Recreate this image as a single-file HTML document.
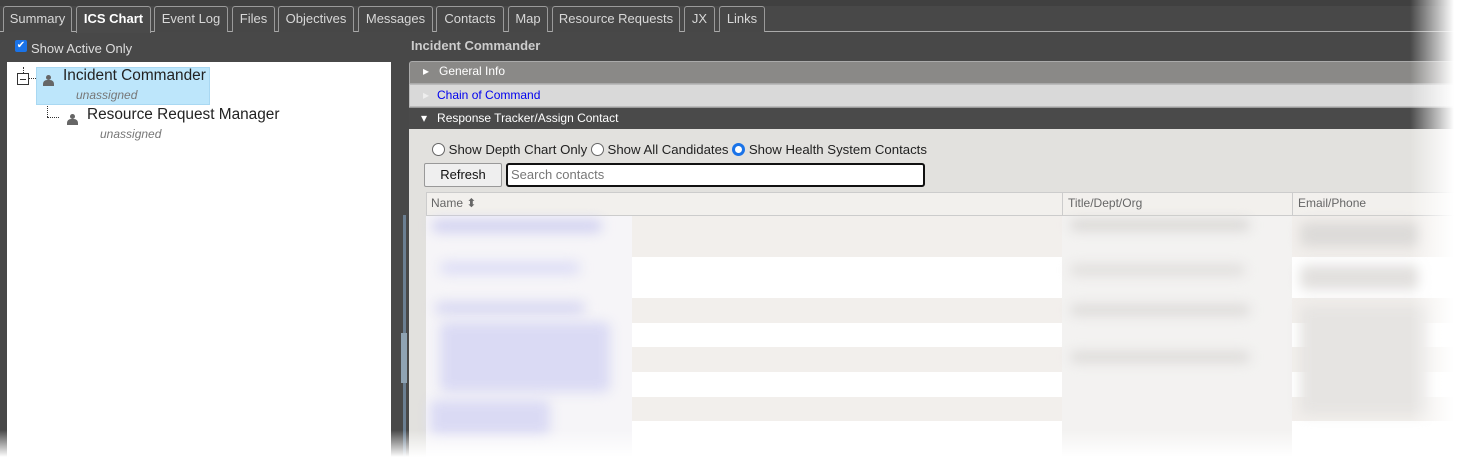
<!DOCTYPE html>
<html><head><meta charset="utf-8"><style>
*{box-sizing:border-box;margin:0;padding:0}
body{width:1465px;height:457px;overflow:hidden;background:#484848;font-family:"Liberation Sans",Arial,sans-serif;position:relative}
.a{position:absolute}
.tab{position:absolute;top:6px;height:26px;border:1px solid #9a9a9a;border-bottom:none;border-radius:3px 3px 0 0;color:#d8d8d8;font-size:13px;text-align:center;line-height:24px;background:#474747}
.tab.act{background:#4a4a4a;color:#fff;font-weight:bold;height:27px}
.ic{display:inline-block;width:10px;height:11px;position:relative;vertical-align:middle}
.ic:before{content:"";position:absolute;left:3px;top:0;width:5px;height:5px;border-radius:50%;background:#666}
.ic:after{content:"";position:absolute;left:0;top:5px;width:11px;height:6px;border-radius:4px 4px 0 0;background:#666}
.row{position:absolute;left:426px;width:1040px}
.blur{position:absolute;filter:blur(6px);border-radius:6px}
</style></head><body>
<div class="a" style="left:0;top:0;width:1465px;height:6px;background:#404040"></div>
<div class="a" style="left:0;top:31px;width:1465px;height:1px;background:#aaa"></div>
<div class="tab" style="left:3px;width:69px">Summary</div>
<div class="tab act" style="left:76px;width:75px">ICS Chart</div>
<div class="tab" style="left:154px;width:74px">Event Log</div>
<div class="tab" style="left:232px;width:43px">Files</div>
<div class="tab" style="left:278px;width:76px">Objectives</div>
<div class="tab" style="left:358px;width:75px">Messages</div>
<div class="tab" style="left:436px;width:68px">Contacts</div>
<div class="tab" style="left:508px;width:40px">Map</div>
<div class="tab" style="left:552px;width:128px">Resource Requests</div>
<div class="tab" style="left:684px;width:31px">JX</div>
<div class="tab" style="left:719px;width:46px">Links</div>

<div class="a" style="left:15px;top:40px;width:12px;height:12px;background:#1a73e8;border-radius:2px;color:#fff;font-size:10px;line-height:12px;text-align:center">✔</div>
<div class="a" style="left:31px;top:41px;color:#ddd;font-size:13px">Show Active Only</div>

<div class="a" style="left:7px;top:62px;width:384px;height:395px;background:#fff"></div>
<div class="a" style="left:23px;top:67px;height:6px;border-left:1px dotted #333"></div>
<div class="a" style="left:17px;top:73px;width:12px;height:12px;border:1px solid #333;background:#fff"></div>
<div class="a" style="left:20px;top:79px;width:6px;height:1px;background:#333"></div>
<div class="a" style="left:29px;top:78px;width:7px;border-top:1px dotted #333"></div>
<div class="a" style="left:36px;top:67px;width:174px;height:38px;background:#bde6fb;border:1px solid #a9d8f2"></div>
<div class="a" style="left:43px;top:72px"><span class="ic"></span></div>
<div class="a" style="left:63px;top:67px;font-size:15.4px;color:#222">Incident Commander</div>
<div class="a" style="left:76px;top:88px;font-size:12px;color:#777;font-style:italic">unassigned</div>
<div class="a" style="left:47px;top:106px;height:11px;border-left:1px dotted #333"></div>
<div class="a" style="left:47px;top:117px;width:12px;border-top:1px dotted #333"></div>
<div class="a" style="left:67px;top:111px"><span class="ic"></span></div>
<div class="a" style="left:87px;top:106px;font-size:15.4px;color:#222">Resource Request Manager</div>
<div class="a" style="left:100px;top:127px;font-size:12px;color:#777;font-style:italic">unassigned</div>

<div class="a" style="left:403px;top:215px;width:3px;height:242px;background:#6b7f92"></div>
<div class="a" style="left:401px;top:333px;width:6px;height:50px;background:#8fa3b3"></div>

<div class="a" style="left:411px;top:38px;color:#ccc;font-size:13px;font-weight:bold">Incident Commander</div>
<div class="a" style="left:409px;top:61px;width:1056px;height:23px;background:#8a8987;border:1px solid #aaa;border-radius:3px 0 0 0"></div>
<div class="a" style="left:423px;top:64px;color:#fff;font-size:12px">▸&nbsp;&nbsp;&nbsp;General Info</div>
<div class="a" style="left:409px;top:84px;width:1056px;height:23px;background:#d9d9d9;border:1px solid #bbb"></div>
<div class="a" style="left:423px;top:88px;color:#eee;font-size:12px">▸</div>
<div class="a" style="left:437px;top:88px;color:#0000ee;font-size:12px">Chain of Command</div>
<div class="a" style="left:409px;top:107px;width:1056px;height:22px;background:#4a4a4a;border-top:1px solid #999"></div>
<div class="a" style="left:421px;top:111px;color:#fff;font-size:12px">▾&nbsp;&nbsp;&nbsp;Response Tracker/Assign Contact</div>

<div class="a" style="left:409px;top:129px;width:1056px;height:328px;background:#e2e1de"></div>
<div class="a" style="left:432px;top:142px;font-size:13.2px;color:#222;white-space:nowrap">
<span style="display:inline-block;width:13px;height:13px;border:1px solid #666;border-radius:50%;background:#fff;vertical-align:-2px"></span> Show Depth Chart Only
<span style="display:inline-block;width:13px;height:13px;border:1px solid #666;border-radius:50%;background:#fff;vertical-align:-2px"></span> Show All Candidates
<span style="display:inline-block;width:13px;height:13px;border:3px solid #1a73e8;border-radius:50%;background:#fff;vertical-align:-2px"></span> Show Health System Contacts</div>
<div class="a" style="left:424px;top:163px;width:78px;height:24px;background:#efefef;border:1px solid #999;border-radius:2px;font-size:13px;text-align:center;line-height:22px;color:#111">Refresh</div>
<div class="a" style="left:506px;top:163px;width:419px;height:24px;background:#fff;border:2px solid #111;border-radius:3px;font-size:13px;color:#777;padding-left:3px;line-height:20px">Search contacts</div>

<div class="row" style="top:192px;height:24px;background:#f2f0ed;border:1px solid #ccc"></div>
<div class="a" style="left:1062px;top:192px;width:1px;height:24px;background:#ccc"></div>
<div class="a" style="left:1292px;top:192px;width:1px;height:24px;background:#ccc"></div>
<div class="a" style="left:431px;top:196px;font-size:12px;color:#666">Name ⬍</div>
<div class="a" style="left:1068px;top:196px;font-size:12px;color:#666">Title/Dept/Org</div>
<div class="a" style="left:1298px;top:196px;font-size:12px;color:#666">Email/Phone</div>

<div class="row" style="top:216px;height:41px;background:#f2efec"></div>
<div class="row" style="top:257px;height:41px;background:#fff"></div>
<div class="row" style="top:298px;height:25px;background:#f2efec"></div>
<div class="row" style="top:323px;height:24px;background:#fff"></div>
<div class="row" style="top:347px;height:25px;background:#f2efec"></div>
<div class="row" style="top:372px;height:25px;background:#fff"></div>
<div class="row" style="top:397px;height:24px;background:#f2efec"></div>
<div class="row" style="top:421px;height:36px;background:#fff"></div>
<div class="a" style="left:426px;top:216px;width:206px;height:241px;background:#f6f5f8"></div>
<div class="a" style="left:1062px;top:216px;width:230px;height:241px;background:#f3f2f1"></div>
<div class="blur" style="left:432px;top:220px;width:170px;height:12px;background:#cfcff0"></div>
<div class="blur" style="left:440px;top:262px;width:140px;height:12px;background:#dcdcf6"></div>
<div class="blur" style="left:435px;top:302px;width:150px;height:12px;background:#d6d6f2"></div>
<div class="blur" style="left:440px;top:322px;width:170px;height:70px;background:#dadaf4"></div>
<div class="blur" style="left:430px;top:400px;width:120px;height:35px;background:#dadaf4"></div>
<div class="blur" style="left:1070px;top:220px;width:180px;height:10px;background:#d6d4d2"></div>
<div class="blur" style="left:1070px;top:265px;width:175px;height:10px;background:#dedcda"></div>
<div class="blur" style="left:1070px;top:305px;width:180px;height:10px;background:#dad8d6"></div>
<div class="blur" style="left:1070px;top:352px;width:180px;height:10px;background:#dad8d6"></div>
<div class="blur" style="left:1300px;top:222px;width:120px;height:25px;background:#dcdad8"></div>
<div class="blur" style="left:1300px;top:265px;width:120px;height:25px;background:#e2e0de"></div>
<div class="blur" style="left:1300px;top:305px;width:130px;height:110px;background:#e6e4e2"></div>

<div class="a" style="left:0;top:430px;width:1465px;height:27px;background:linear-gradient(to bottom,rgba(255,255,255,0),#fff)"></div>
<div class="a" style="left:1410px;top:0;width:55px;height:457px;background:linear-gradient(to right,rgba(255,255,255,0),#fff 80%)"></div>
</body></html>
